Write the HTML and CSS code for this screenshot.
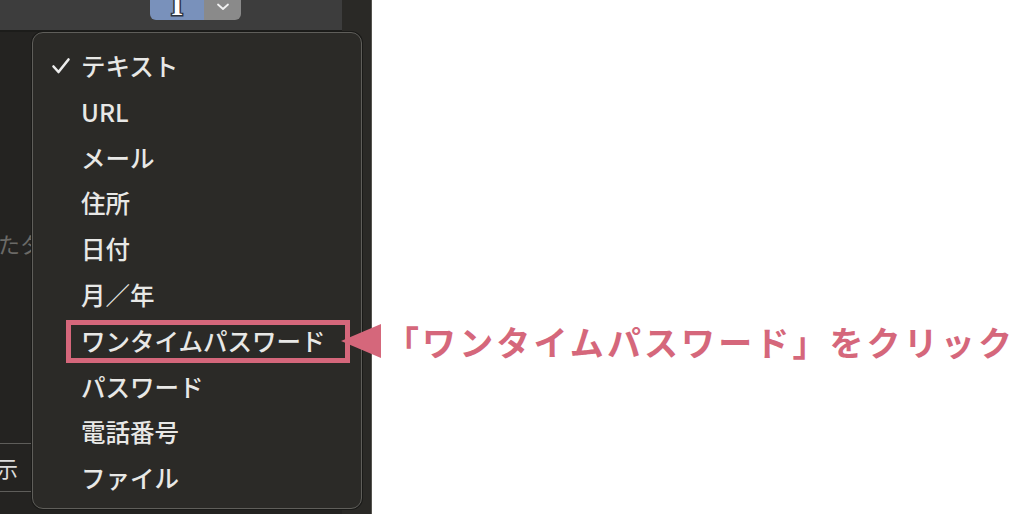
FILE: index.html
```html
<!DOCTYPE html>
<html lang="ja">
<head>
    <meta charset="UTF-8">
    <title>テキスト種類メニュー</title>
    <link rel="stylesheet" href="styles.css">
</head>
<body>
    <div class="panel">
        <div class="main">
            <div class="toolbar">
                <div class="type-button">
                    <span class="type-icon"><span class="type-glyph">I</span></span>
                    <span class="type-arrow">
                        <svg width="14" height="8" viewBox="0 0 14 8"><path d="M2 1.5 L7 6 L12 1.5" fill="none" stroke="#f2f2f2" stroke-width="1.8" stroke-linecap="round" stroke-linejoin="round"/></svg>
                    </span>
                </div>
            </div>
            <div class="content">
                <p class="hint">たタグ</p>
                <div class="show-button">表示</div>
            </div>
        </div>
        <div class="side"></div>
    </div>

    <ul class="menu">
        <li class="checked">
            <svg class="check" width="20" height="18" viewBox="0 0 20 18"><path d="M2.5 9.5 L7.5 15 L17.5 2.5" fill="none" stroke="#ececec" stroke-width="2.6" stroke-linecap="round" stroke-linejoin="round"/></svg>
            テキスト
        </li>
        <li>URL</li>
        <li>メール</li>
        <li>住所</li>
        <li>日付</li>
        <li>月／年</li>
        <li class="highlight">ワンタイムパスワード</li>
        <li>パスワード</li>
        <li>電話番号</li>
        <li>ファイル</li>
    </ul>

    <div class="callout">
        <span class="pointer"></span>
        <span class="callout-text">「ワンタイムパスワード」をクリック</span>
    </div>
</body>
</html>
```

FILE: styles.css
```css
body {
    margin: 0;
    background: #ffffff;
    font-family: "Noto Sans CJK JP", "Noto Sans", sans-serif;
    width: 1024px;
    height: 514px;
    overflow: hidden;
    position: relative;
}

.panel {
    display: flex;
    width: 372px;
    height: 514px;
    border-right: 1px solid #55544f;
    box-sizing: border-box;
}

.main {
    width: 342px;
    display: flex;
    flex-direction: column;
}

.toolbar {
    height: 30px;
    background: #3d3d3d;
    border-bottom: 2px solid #1c1c1a;
    padding-left: 150px;
}

.type-button {
    display: flex;
    height: 20px;
    width: 91px;
    border-radius: 0 0 6px 6px;
    overflow: hidden;
}

.type-icon {
    width: 54px;
    background: #7991bb;
    overflow: hidden;
    text-align: center;
}

.type-glyph {
    display: block;
    margin-top: -7px;
    color: #ffffff;
    font-family: "Liberation Serif", serif;
    font-weight: bold;
    font-size: 30px;
    line-height: 24px;
    -webkit-text-stroke: 3px #2d3340;
    paint-order: stroke fill;
}

.type-arrow {
    flex: 1;
    background: #8a8a8a;
    display: flex;
    justify-content: center;
    padding-top: 3px;
}

.content {
    flex: 1;
    background: #242321;
    padding-top: 196px;
}

.hint {
    margin: 0 0 0 -2px;
    font-size: 22px;
    color: #6b6a67;
    line-height: 30px;
    white-space: nowrap;
}

.show-button {
    margin: 185px 0 0 -30px;
    width: 160px;
    height: 49px;
    box-sizing: border-box;
    border-top: 1px solid #5e5d5a;
    border-bottom: 1px solid #5e5d5a;
    color: #dcdcdc;
    font-size: 22px;
    line-height: 46px;
    padding-left: 4px;
}

.side {
    flex: 1;
    background: #2a2926;
}

.menu {
    position: absolute;
    left: 32px;
    top: 32px;
    width: 330px;
    height: 477px;
    box-sizing: border-box;
    margin: 0;
    padding: 10px 0 0;
    list-style: none;
    background: #2b2a27;
    border: 1px solid #5f5e5a;
    border-radius: 11px;
    box-shadow: 0 0 0 1px #1a1a18;
}

.menu li {
    position: relative;
    height: 45.8px;
    line-height: 45.8px;
    padding-left: 48px;
    font-size: 24.5px;
    font-weight: 500;
    color: #e8e8e6;
    white-space: nowrap;
}

.check {
    position: absolute;
    left: 18px;
    top: 14px;
}

.highlight::before {
    content: "";
    position: absolute;
    left: 33px;
    right: 11px;
    top: 2px;
    bottom: 1px;
    border: 5px solid #d5677b;
}

.callout {
    position: absolute;
    left: 341px;
    top: 318px;
    display: flex;
    align-items: center;
    height: 46px;
}

.pointer {
    width: 0;
    height: 0;
    border-top: 17px solid transparent;
    border-bottom: 17px solid transparent;
    border-right: 40px solid #d5677b;
}

.callout-text {
    margin-left: 4px;
    font-size: 34px;
    font-weight: bold;
    letter-spacing: 3.1px;
    color: #d5677b;
    white-space: nowrap;
}
```
